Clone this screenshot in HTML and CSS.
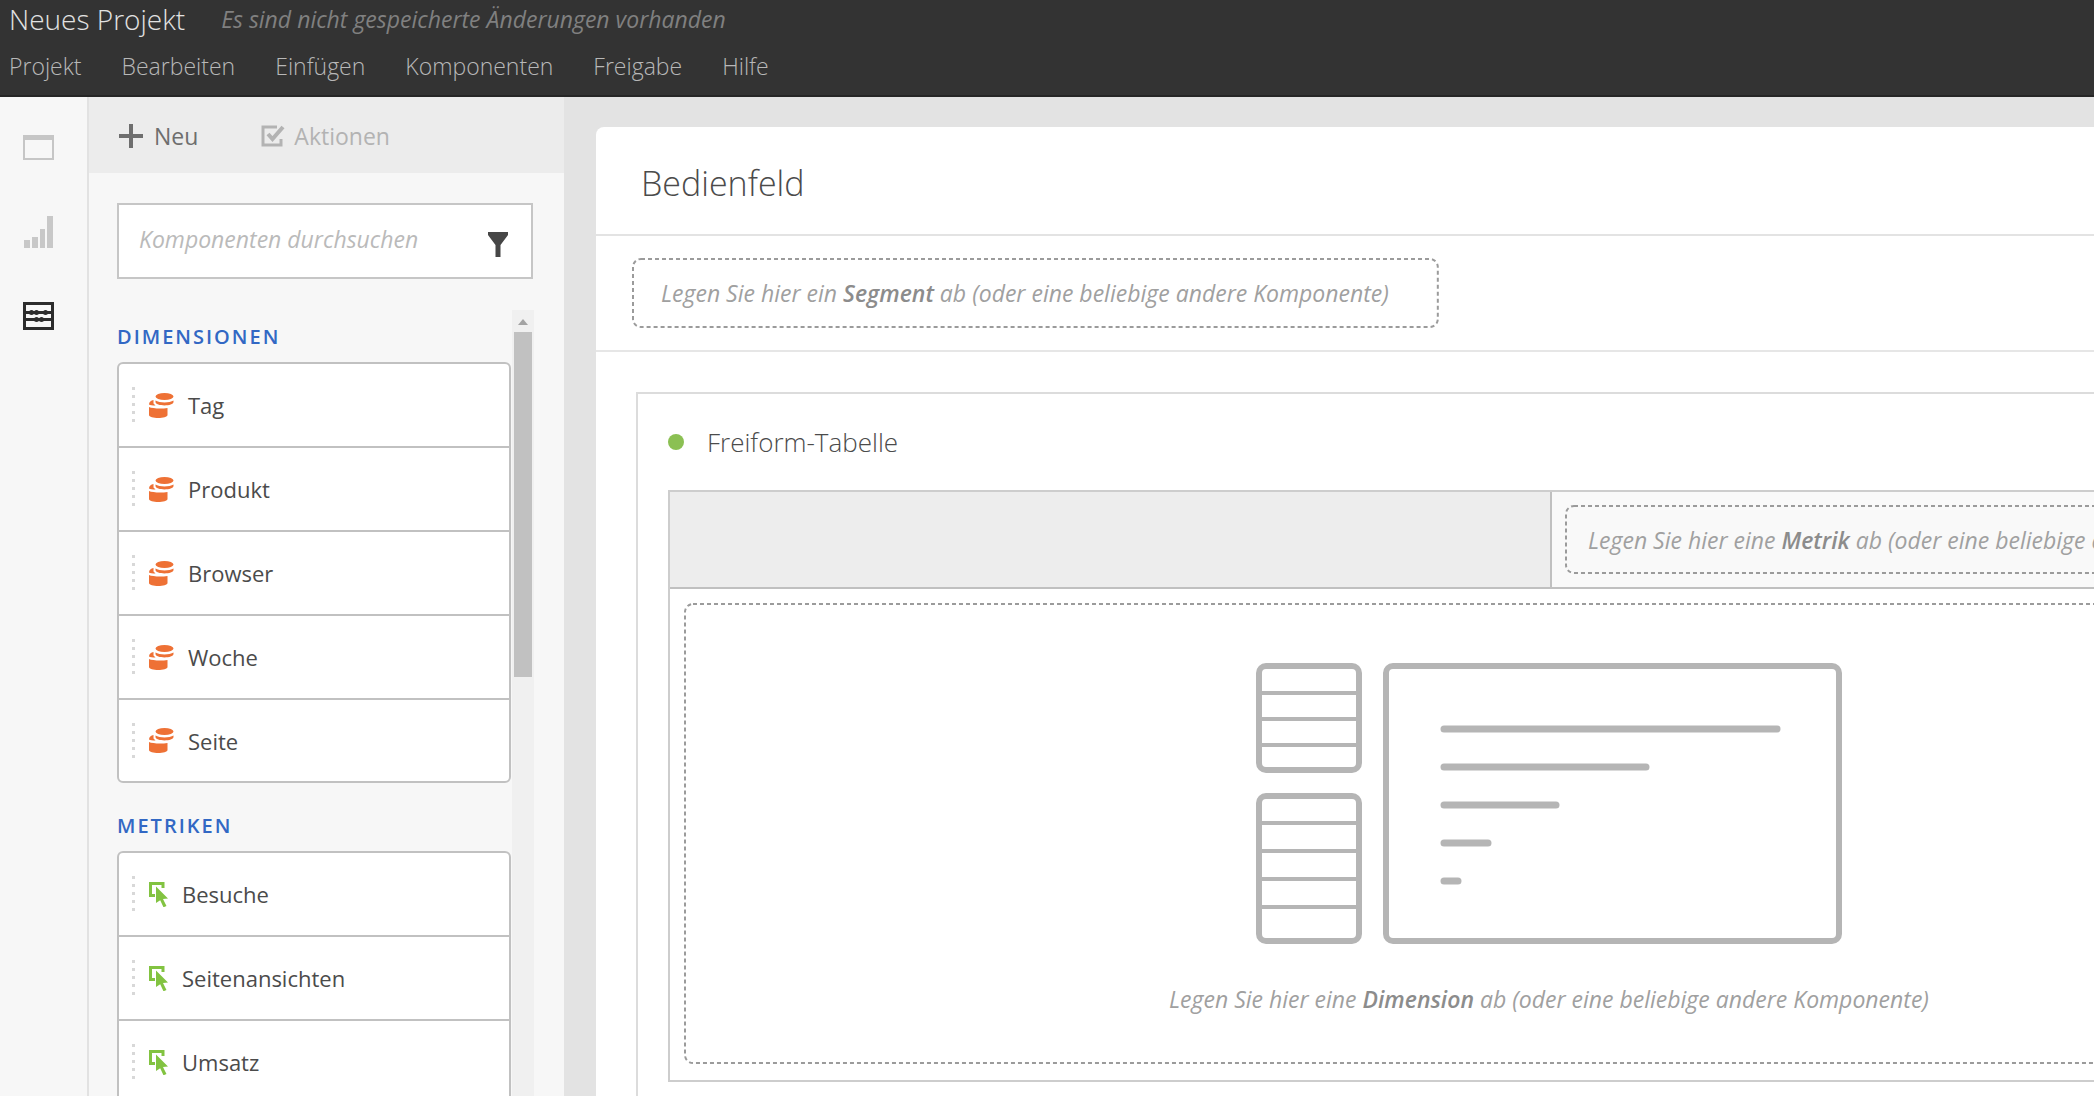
FILE: index.html
```
<!DOCTYPE html>
<html lang="de">
<head>
<meta charset="utf-8">
<title>Neues Projekt</title>
<link rel="stylesheet" href="styles.css">
</head>
<body>
<svg class="sprite" aria-hidden="true">
  <symbol id="grip" viewBox="0 0 4 36">
    <g fill="#d8d8d8"><rect width="3" height="3"/><rect y="8" width="3" height="3"/><rect y="16" width="3" height="3"/><rect y="24" width="3" height="3"/><rect y="32" width="3" height="3"/></g>
  </symbol>
  <symbol id="dimension" viewBox="0 0 25 25">
    <g fill="#ee7135">
      <ellipse cx="15.500" cy="3.500" rx="9" ry="3.500"/>
      <path d="M6.500 7.500c4 2.500 14 2.500 18 0v1.500c0 4.500-18 4.500-18 0z"/>
      <path d="M0 14c3 1.500 12 2 18.500 1V22c0 4-18.500 4-18.500 0z"/>
      <path d="M0 11.500C0 9 2 7.500 4.500 7v3.500l2 2c-3 0-5.500-.300-6.500-1z"/>
    </g>
  </symbol>
  <symbol id="metric" viewBox="0 0 19 25">
    <path d="M6 13.500H1.500v-12H14V6" fill="none" stroke="#82c341" stroke-width="3"/>
    <path d="M7 4.500l12 12-5 .500 3.500 7-3 1.300-3.300-7.100L7 21z" fill="#82c341"/>
  </symbol>
</svg>

<header class="topbar">
  <div class="title-row">
    <h1>Neues Projekt</h1>
    <em>Es sind nicht gespeicherte Änderungen vorhanden</em>
  </div>
  <nav class="menu">
    <a href="#">Projekt</a><a href="#">Bearbeiten</a><a href="#">Einfügen</a><a href="#">Komponenten</a><a href="#">Freigabe</a><a href="#">Hilfe</a>
  </nav>
</header>

<div class="app">
  <nav class="rail">
    <button aria-label="Bedienfelder"><svg width="31" height="32" viewBox="0 0 31 32"><path d="M1 4h29v23H1z" fill="none" stroke="#c6c6c6" stroke-width="2"/><path d="M0 3h31v5H0z" fill="#c6c6c6"/></svg></button>
    <button aria-label="Visualisierungen"><svg width="31" height="32" viewBox="0 0 31 32"><path d="M1 24h6v8H1zM9 21h6v11H9zM17 13h5v19h-5zM24 0h6v32h-6z" fill="#c8c8c8"/></svg></button>
    <button aria-label="Komponenten"><svg width="31" height="32" viewBox="0 0 31 32"><path d="M1.500 3.500h28v25h-28z" fill="none" stroke="#2c2c2c" stroke-width="3"/><path d="M2 12.500h27M2 19.500h27" stroke="#2c2c2c" stroke-width="3"/><g fill="#2c2c2c"><circle cx="8.500" cy="12.500" r="2.500"/><circle cx="13.500" cy="12.500" r="2.500"/><circle cx="22.500" cy="12.500" r="2.500"/><circle cx="13.500" cy="19.500" r="2.500"/><circle cx="18.500" cy="19.500" r="2.500"/></g></svg></button>
  </nav>

  <aside class="sidebar">
    <div class="toolbar">
      <button><svg width="26" height="26" viewBox="0 0 26 26"><path d="M13 1v24M1 13h24" stroke="#6e6e6e" stroke-width="4"/></svg>Neu</button>
      <button disabled><svg width="26" height="26" viewBox="0 0 26 26"><path d="M17 4H3v18h18v-6" fill="none" stroke="#b3b3b3" stroke-width="3"/><path d="M8 11l4.500 5L23 4" fill="none" stroke="#b3b3b3" stroke-width="4"/></svg>Aktionen</button>
    </div>
    <div class="search">
      <input type="text" aria-label="Komponenten durchsuchen" placeholder="Komponenten durchsuchen">
      <button aria-label="Filter"><svg width="20" height="25" viewBox="0 0 20 25"><path d="M0 0h20v3l-7.500 10v12h-5V13L0 3z" fill="#464646"/></svg></button>
    </div>
    <div class="components">
      <div class="lists">
        <h2>DIMENSIONEN</h2>
        <ul>
          <li><svg class="grip"><use href="#grip"/></svg><svg class="icon"><use href="#dimension"/></svg>Tag</li>
          <li><svg class="grip"><use href="#grip"/></svg><svg class="icon"><use href="#dimension"/></svg>Produkt</li>
          <li><svg class="grip"><use href="#grip"/></svg><svg class="icon"><use href="#dimension"/></svg>Browser</li>
          <li><svg class="grip"><use href="#grip"/></svg><svg class="icon"><use href="#dimension"/></svg>Woche</li>
          <li><svg class="grip"><use href="#grip"/></svg><svg class="icon"><use href="#dimension"/></svg>Seite</li>
        </ul>
        <h2>METRIKEN</h2>
        <ul>
          <li><svg class="grip"><use href="#grip"/></svg><svg class="icon narrow"><use href="#metric"/></svg>Besuche</li>
          <li><svg class="grip"><use href="#grip"/></svg><svg class="icon narrow"><use href="#metric"/></svg>Seitenansichten</li>
          <li><svg class="grip"><use href="#grip"/></svg><svg class="icon narrow"><use href="#metric"/></svg>Umsatz</li>
          <li></li>
        </ul>
      </div>
      <div class="scrollbar">
        <svg width="10" height="6" viewBox="0 0 10 6"><path d="M5 0l5 6H0z" fill="#a3a3a3"/></svg>
        <div class="thumb"></div>
      </div>
    </div>
  </aside>

  <main class="workspace">
    <section class="panel">
      <h2>Bedienfeld</h2>
      <div class="segment-row">
        <div class="drop"><svg class="dash"><rect x="1" y="1" rx="8"/></svg><p>Legen Sie hier ein <b>Segment</b> ab (oder eine beliebige andere Komponente)</p></div>
      </div>
      <section class="freeform">
        <h3><span class="dot"></span>Freiform-Tabelle</h3>
        <div class="grid">
          <div class="head">
            <div class="blank"></div>
            <div class="metric-cell">
              <div class="drop compact"><svg class="dash"><rect x="1" y="1" rx="8"/></svg><p>Legen Sie hier eine <b>Metrik</b> ab (oder eine beliebige andere Komponente)</p></div>
            </div>
          </div>
          <div class="body">
            <div class="drop large"><svg class="dash"><rect x="1" y="1" rx="8"/></svg>
              <svg width="586" height="281" viewBox="0 0 586 281">
                <g fill="none" stroke="#b5b5b5">
                  <g stroke-width="6"><rect x="3" y="3" width="100" height="104" rx="7"/><rect x="3" y="133" width="100" height="145" rx="7"/><rect x="130" y="3" width="453" height="275" rx="7"/></g>
                  <path stroke-width="4" d="M4 30h98M4 56h98M4 82h98M4 160h98M4 188h98M4 216h98M4 244h98"/>
                  <path stroke-width="7" stroke-linecap="round" d="M188 66h333M188 104h202M188 142h112M188 180h44M188 218h14"/>
                </g>
              </svg>
              <p>Legen Sie hier eine <b>Dimension</b> ab (oder eine beliebige andere Komponente)</p>
            </div>
          </div>
        </div>
      </section>
    </section>
  </main>
</div>
</body>
</html>
```
FILE: styles.css
```
* { box-sizing: border-box; }

body {
  margin: 0;
  height: 100vh;
  display: flex;
  flex-direction: column;
  overflow: hidden;
  background: #e3e3e3;
  color: #4b4b4b;
  font: 22px/32px "Open Sans", "Noto Sans", sans-serif;
}

h1, h2, h3, p, ul { margin: 0; padding: 0; }
h1, h2, h3 { font-weight: 300; }
button { display: flex; align-items: center; padding: 0; border: 0; background: none; color: inherit; font: inherit; }
svg { display: block; flex: none; }
.sprite { position: absolute; width: 0; height: 0; }

/* Top bar */
.topbar {
  flex: none;
  height: 97px;
  padding: 0 9px;
  background: #333;
  border-bottom: 2px solid #262626;
}
.title-row { display: flex; align-items: center; gap: 36px; height: 38px; }
.title-row h1 { color: #e2e2e2; font-size: 28px; }
.title-row em { color: #808080; font-size: 23px; }
.menu { display: flex; gap: 40px; padding-top: 12px; }
.menu a { color: #b8b8b8; font-size: 23px; font-weight: 300; text-decoration: none; }

.app { flex: 1; min-height: 0; display: flex; }

/* Icon rail */
.rail {
  flex: none;
  width: 89px;
  padding: 35px 0 0 23px;
  display: flex;
  flex-direction: column;
  gap: 52px;
  background: #f7f7f7;
  border-right: 2px solid #e2e2e2;
}

/* Component sidebar */
.sidebar { flex: none; width: 475px; display: flex; flex-direction: column; background: #f7f7f7; }
.toolbar { flex: none; height: 76px; padding: 2px 29px 0; display: flex; align-items: center; gap: 62px; background: #ececec; color: #6e6e6e; }
.toolbar button { gap: 10px; font-size: 23px; }
.toolbar button:disabled { gap: 8px; color: #b3b3b3; }

.search {
  flex: none;
  height: 76px;
  margin: 30px 31px 0 28px;
  padding: 0 23px 0 20px;
  display: flex;
  align-items: center;
  background: #fff;
  border: 2px solid #c6c6c6;
}
.search input { flex: 1; min-width: 0; padding: 0 0 5px; border: 0; outline: 0; background: none; color: #4b4b4b; font: inherit; font-size: 23px; }
.search input::placeholder { color: #bababa; font-style: italic; opacity: 1; }
.search button { padding-top: 6px; }

.components { flex: 1; min-height: 0; margin: 31px 30px 0 28px; display: flex; gap: 1px; overflow: hidden; }
.lists { flex: 1; }
.lists h2 { padding: 11px 0 9px; color: #3268c4; font-size: 20px; font-weight: 600; letter-spacing: 2px; }
.lists ul { margin-bottom: 16px; list-style: none; background: #fff; border: 2px solid #c1c1c1; border-radius: 6px; }
.lists li { height: 84px; padding: 0 13px; display: flex; align-items: center; border-bottom: 2px solid #c1c1c1; }
.lists li:last-child { height: 81px; border-bottom: 0; }
.grip { width: 4px; height: 36px; margin-right: 13px; }
.icon { width: 25px; height: 25px; margin-right: 14px; }
.icon.narrow { width: 19px; }

.scrollbar { width: 22px; padding-top: 9px; display: flex; flex-direction: column; align-items: center; gap: 7px; background: #f0f0f0; }
.thumb { width: 18px; height: 345px; background: #c1c1c1; }

/* Workspace, wider than the window and cut off at its right edge */
.workspace { flex: 1; min-width: 0; padding: 30px 0 0 32px; overflow: hidden; }
.panel { min-width: 1866px; min-height: 100%; background: #fff; border-radius: 8px 8px 0 0; }
.panel h2 { height: 109px; padding: 32px 45px; border-bottom: 2px solid #e3e3e3; font-size: 34px; line-height: 48px; }
.segment-row { padding: 22px 36px; display: flex; border-bottom: 2px solid #e6e6e6; }

.drop { position: relative; height: 70px; padding: 0 50px 0 29px; display: flex; align-items: center; color: #a0a0a0; font-size: 23px; font-style: italic; white-space: nowrap; }
.drop b { color: #8c8c8c; font-weight: 600; }
.dash { position: absolute; inset: 0; width: 100%; height: 100%; }
.dash rect { width: calc(100% - 2px); height: calc(100% - 2px); fill: none; stroke: #9b9b9b; stroke-width: 2px; stroke-dasharray: 4 3; }

.freeform { margin: 40px 0 0 40px; padding: 0 30px 60px; border: 2px solid #dcdcdc; }
.freeform h3 { height: 96px; display: flex; align-items: center; gap: 23px; font-size: 26px; }
.dot { width: 16px; height: 16px; border-radius: 50%; background: #8bc053; }

.grid { border: 2px solid #cdcdcd; }
.head { display: grid; grid-template-columns: 882px 1fr; border-bottom: 2px solid #c0c0c0; }
.blank { background: #ededed; border-right: 2px solid #c0c0c0; }
.metric-cell { padding: 13px; background: #f9f9f9; }
.drop.compact { height: 69px; padding-left: 23px; }
.body { padding: 14px 14px 16px; }
.drop.large { height: 461px; padding: 60px 0 0; flex-direction: column; align-items: center; gap: 39px; }
```
